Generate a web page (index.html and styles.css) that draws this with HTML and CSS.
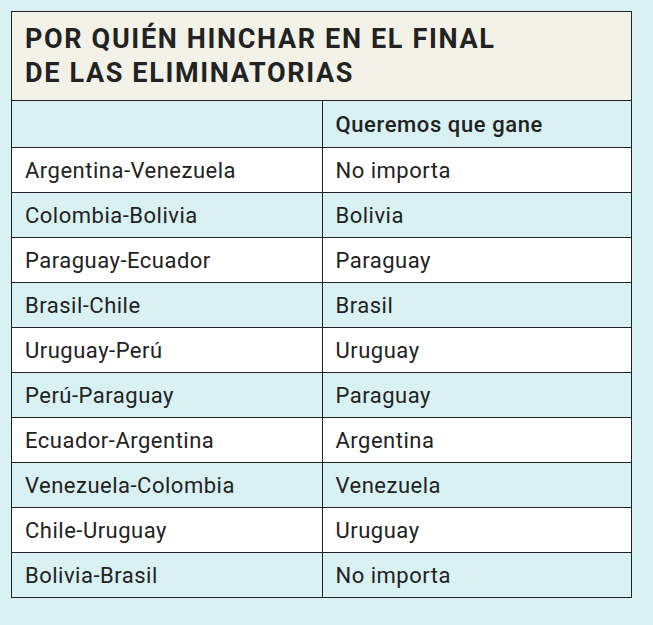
FILE: index.html
```html
<!DOCTYPE html>
<html lang="es">
<head>
<meta charset="utf-8">
<link rel="stylesheet" href="styles.css">
</head>
<body>
<div class="card">
  <h1 class="title">POR QUIÉN HINCHAR EN EL FINAL<br>DE LAS ELIMINATORIAS</h1>
  <table class="grid">
    <thead>
      <tr class="alt"><th></th><th>Queremos que gane</th></tr>
    </thead>
    <tbody>
      <tr><td>Argentina-Venezuela</td><td>No importa</td></tr>
      <tr class="alt"><td>Colombia-Bolivia</td><td>Bolivia</td></tr>
      <tr><td>Paraguay-Ecuador</td><td>Paraguay</td></tr>
      <tr class="alt"><td>Brasil-Chile</td><td>Brasil</td></tr>
      <tr><td>Uruguay-Perú</td><td>Uruguay</td></tr>
      <tr class="alt"><td>Perú-Paraguay</td><td>Paraguay</td></tr>
      <tr><td>Ecuador-Argentina</td><td>Argentina</td></tr>
      <tr class="alt"><td>Venezuela-Colombia</td><td>Venezuela</td></tr>
      <tr><td>Chile-Uruguay</td><td>Uruguay</td></tr>
      <tr class="alt"><td>Bolivia-Brasil</td><td>No importa</td></tr>
    </tbody>
  </table>
</div>
</body>
</html>
```
FILE: styles.css
```css
html, body {
  margin: 0;
  padding: 0;
  background: #d9f1f2;
}
body {
  padding: 11px 21px 0 11px;
  font-family: Roboto, "Open Sans", sans-serif;
  color: #222;
}
.card {
  width: 621px;
  border: 1px solid #222;
  box-sizing: border-box;
}
.title {
  margin: 0;
  background: #f2f2e8;
  border-bottom: 1px solid #222;
  height: 89px;
  box-sizing: border-box;
  padding: 10px 13px 0 13px;
  font-size: 27px;
  line-height: 34px;
  font-weight: 700;
  letter-spacing: 1.65px;
}
.grid {
  width: 100%;
  border-collapse: collapse;
  table-layout: fixed;
}
.grid th, .grid td {
  height: 45px;
  box-sizing: border-box;
  padding: 1px 13px 0 13px;
  text-align: left;
  font-size: 22px;
  font-weight: 400;
  letter-spacing: 0.5px;
  border-top: 1px solid #222;
  vertical-align: middle;
}
.grid th {
  height: 46px;
  font-weight: 500;
  letter-spacing: 0.6px;
  border-top: none;
}
.grid th:first-child, .grid td:first-child {
  width: 310px;
  border-right: 1px solid #222;
}
.grid tr { background: #fff; }
.grid tr.alt { background: #d9f1f2; }
```
